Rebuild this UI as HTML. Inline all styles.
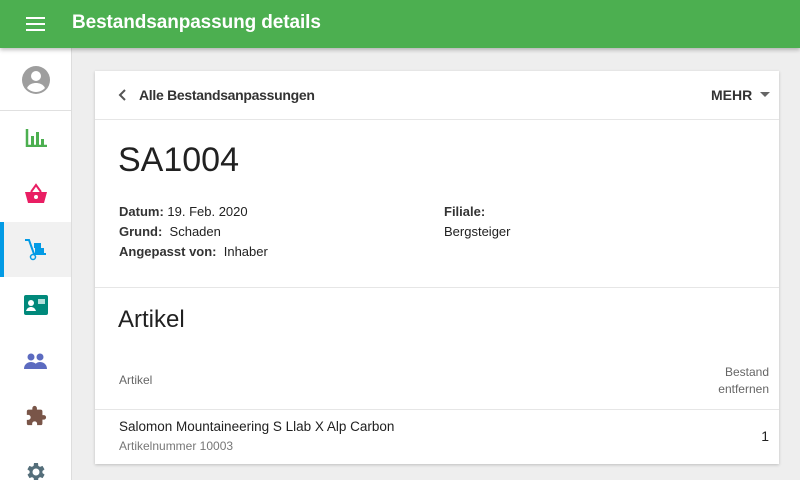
<!DOCTYPE html><html><head><style>
*{margin:0;padding:0;box-sizing:border-box}
html,body{width:800px;height:480px;overflow:hidden}
body{background:#eeeeee;font-family:"Liberation Sans",sans-serif;color:#212121;position:relative}
.top{position:absolute;left:0;top:0;width:800px;height:48px;background:#4caf50;box-shadow:0 2px 4px rgba(0,0,0,.25);z-index:2}
.top .t{position:absolute;left:72px;top:12px;color:#fff;font-size:19px;font-weight:bold;letter-spacing:-0.1px}
.side{position:absolute;left:0;top:48px;width:72px;height:432px;background:#fff;border-right:1px solid #ddd}
.ic{position:absolute;left:0;width:71px;height:55px;display:flex;align-items:center;justify-content:center}
.card{position:absolute;left:95px;top:71px;width:684px;height:393px;background:#fff;box-shadow:0 1px 3px rgba(0,0,0,.2)}
.a{position:absolute;white-space:nowrap}
.hr{position:absolute;left:0;width:684px;height:1px;background:#e6e6e6}
b{font-weight:bold;color:#333}
</style></head><body>
<div class="top">
<svg style="position:absolute;left:26px;top:16px" width="20" height="16"><rect y="1" width="19" height="2" fill="#fff"/><rect y="7" width="19" height="2" fill="#fff"/><rect y="13" width="19" height="2" fill="#fff"/></svg>
<div class="t">Bestandsanpassung details</div></div>
<div class="side">
<div class="ic" style="top:4px"><svg width="30" height="30" viewBox="0 0 30 30"><circle cx="15" cy="15" r="14" fill="#9e9e9e"/><circle cx="15" cy="11" r="5" fill="#fff"/><path d="M6 23c2-4 6-5 9-5s7 1 9 5c-2 2-5 4-9 4s-7-2-9-4z" fill="#fff"/></svg></div>
<div style="position:absolute;left:0;top:62px;width:71px;height:1px;background:#e0e0e0"></div>
<div class="ic" style="top:62px"><svg width="22" height="18"><path d="M2 0v17h20" stroke="#4caf50" stroke-width="2.5" fill="none"/><rect x="6" y="7" width="3" height="10" fill="#4caf50"/><rect x="11" y="3" width="3" height="14" fill="#4caf50"/><rect x="16" y="10" width="3" height="7" fill="#4caf50"/></svg></div>
<div class="ic" style="top:118px"><svg width="24" height="22"><path d="M7 9l5-7 5 7" stroke="#e91e63" stroke-width="2" fill="none"/><path d="M1 9h22l-3 11H4z" fill="#e91e63"/><circle cx="12" cy="14" r="2" fill="#fff"/></svg></div>
<div class="ic" style="top:174px;background:#f1f1f1"><svg width="26" height="24"><path d="M2 2h4l5 14h12" stroke="#039be5" stroke-width="2" fill="none"/><rect x="11" y="5" width="7" height="5" fill="#039be5"/><rect x="12" y="10" width="9" height="5" fill="#039be5"/><circle cx="10" cy="19" r="2.5" fill="none" stroke="#039be5" stroke-width="1.5"/></svg></div>
<div style="position:absolute;left:0;top:174px;width:4px;height:55px;background:#039be5"></div>
<div class="ic" style="top:229px"><svg width="24" height="20"><rect width="24" height="20" rx="2" fill="#00897b"/><circle cx="7" cy="8" r="3" fill="#fff"/><path d="M2 16c1-3 3-4 5-4s4 1 5 4z" fill="#fff"/><rect x="14" y="4" width="7" height="5" fill="#b2dfdb"/></svg></div>
<div class="ic" style="top:285px"><svg width="24" height="16"><circle cx="7" cy="4" r="3.5" fill="#5c6bc0"/><circle cx="16" cy="4" r="3.5" fill="#5c6bc0"/><path d="M0 16c0-5 4-7 7-7s7 2 7 7z M10 16c0-5 3-7 6-7s7 2 7 7z" fill="#5c6bc0"/></svg></div>
<div class="ic" style="top:340px"><svg width="22" height="22" viewBox="0 0 24 24"><path d="M20.5 11H19V7a2 2 0 0 0-2-2h-4V3.5a2.5 2.5 0 0 0-5 0V5H4a2 2 0 0 0-2 2v3.8h1.5a2.7 2.7 0 0 1 0 5.4H2V20a2 2 0 0 0 2 2h3.8v-1.5a2.7 2.7 0 0 1 5.4 0V22H17a2 2 0 0 0 2-2v-4h1.5a2.5 2.5 0 0 0 0-5z" fill="#795548"/></svg></div>
<div class="ic" style="top:396px"><svg width="24" height="24" viewBox="0 0 24 24"><path d="M19.4 13a7.5 7.5 0 0 0 0-2l2.1-1.6-2-3.5-2.5 1a7 7 0 0 0-1.7-1L15 3h-4l-.4 2.9a7 7 0 0 0-1.7 1l-2.5-1-2 3.5L6.6 11a7.5 7.5 0 0 0 0 2l-2.1 1.6 2 3.5 2.5-1a7 7 0 0 0 1.7 1L11 21h4l.4-2.9a7 7 0 0 0 1.7-1l2.5 1 2-3.5zM13 15.5a3.5 3.5 0 1 1 0-7 3.5 3.5 0 0 1 0 7z" fill="#546e7a" transform="translate(-1 0)"/></svg></div>
</div>
<div class="card">
<svg class="a" style="left:23px;top:17px" width="10" height="14"><path d="M7 2L2 7l5 5" stroke="#555" stroke-width="2" fill="none"/></svg>
<div class="a" style="left:44px;top:16px;font-size:14px;font-weight:bold;color:#333;letter-spacing:-0.3px">Alle Bestandsanpassungen</div>
<div class="a" style="left:616px;top:16px;font-size:14px;font-weight:bold;color:#333">MEHR</div>
<svg class="a" style="left:664px;top:20px" width="12" height="8"><path d="M1 1h10L6 6z" fill="#666"/></svg>
<div class="hr" style="top:48px"></div>
<div class="a" style="left:23px;top:70px;font-size:34px">SA1004</div>
<div class="a" style="left:24px;top:131px;font-size:13px;line-height:20px"><b>Datum:</b> 19. Feb. 2020<br><b>Grund:</b>&nbsp; Schaden<br><b>Angepasst von:</b>&nbsp; Inhaber</div>
<div class="a" style="left:349px;top:131px;font-size:13px;line-height:20px"><b>Filiale:</b><br>Bergsteiger</div>
<div class="hr" style="top:216px"></div>
<div class="a" style="left:23px;top:235px;font-size:24px">Artikel</div>
<div class="a" style="left:24px;top:302px;font-size:12px;color:#666">Artikel</div>
<div class="a" style="right:10px;top:293px;font-size:12px;color:#666;text-align:right;line-height:17px">Bestand<br>entfernen</div>
<div class="hr" style="top:338px"></div>
<div class="a" style="left:24px;top:348px;font-size:13.5px">Salomon Mountaineering S Llab X Alp Carbon</div>
<div class="a" style="left:24px;top:368px;font-size:12px;color:#777">Artikelnummer 10003</div>
<div class="a" style="right:10px;top:357px;font-size:14px">1</div>
</div>
</body></html>
